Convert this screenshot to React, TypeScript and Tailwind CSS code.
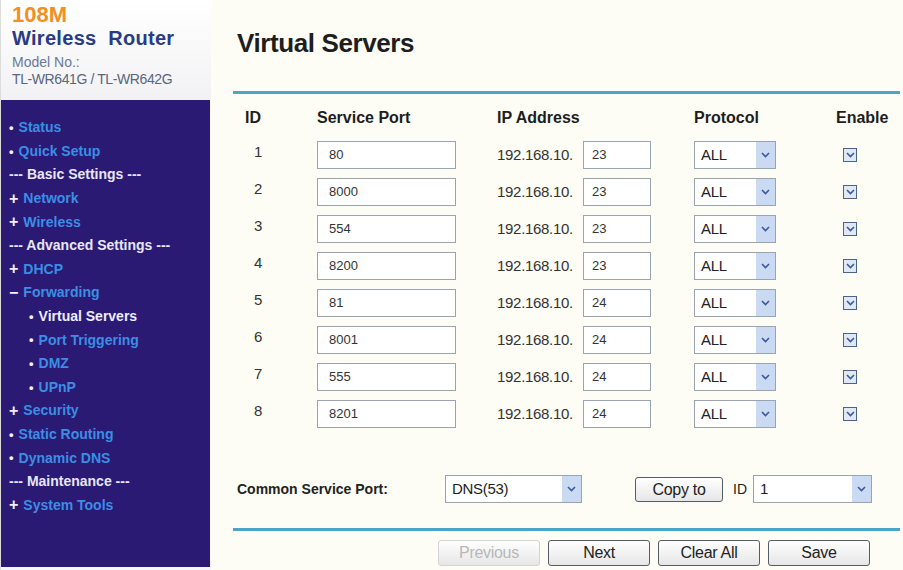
import React from 'react';

const menu: { kind: 'dot' | 'plus' | 'minus' | 'head' | 'sub'; label: string; active?: boolean }[] = [
  { kind: 'dot', label: 'Status' },
  { kind: 'dot', label: 'Quick Setup' },
  { kind: 'head', label: 'Basic Settings' },
  { kind: 'plus', label: 'Network' },
  { kind: 'plus', label: 'Wireless' },
  { kind: 'head', label: 'Advanced Settings' },
  { kind: 'plus', label: 'DHCP' },
  { kind: 'minus', label: 'Forwarding' },
  { kind: 'sub', label: 'Virtual Servers', active: true },
  { kind: 'sub', label: 'Port Triggering' },
  { kind: 'sub', label: 'DMZ' },
  { kind: 'sub', label: 'UPnP' },
  { kind: 'plus', label: 'Security' },
  { kind: 'dot', label: 'Static Routing' },
  { kind: 'dot', label: 'Dynamic DNS' },
  { kind: 'head', label: 'Maintenance' },
  { kind: 'plus', label: 'System Tools' },
];

const rows = [
  { id: 1, port: '80', ip: '23' },
  { id: 2, port: '8000', ip: '23' },
  { id: 3, port: '554', ip: '23' },
  { id: 4, port: '8200', ip: '23' },
  { id: 5, port: '81', ip: '24' },
  { id: 6, port: '8001', ip: '24' },
  { id: 7, port: '555', ip: '24' },
  { id: 8, port: '8201', ip: '24' },
];

function Chevron() {
  return (
    <svg width="9" height="6" viewBox="0 0 9 6">
      <path d="M1 1 L4.5 4.5 L8 1" fill="none" stroke="#3a5a9a" strokeWidth="1.6" />
    </svg>
  );
}

function Select({ value, w }: { value: string; w: string }) {
  return (
    <div className={`${w} h-[28px] flex items-stretch border border-[#9aa4b0] bg-white font-normal`}>
      <span className="flex-1 pl-[6px] flex items-center text-[15px] text-[#222] tracking-[-0.3px]">{value}</span>
      <span className="w-[19px] bg-[#c9daf2] flex items-center justify-center">
        <Chevron />
      </span>
    </div>
  );
}

function Check() {
  return (
    <span className="w-[14px] h-[14px] border border-[#4a6488] bg-[#dfe8f4] flex items-center justify-center">
      <Chevron />
    </span>
  );
}

function Btn({ label, disabled }: { label: string; disabled?: boolean }) {
  return (
    <button
      className={`w-[102px] h-[26px] rounded-[3px] text-[16px] tracking-[-0.3px] bg-gradient-to-b from-white to-[#e6e6e6] ${
        disabled ? 'border border-[#d4d4d4] text-[#b8b8b8]' : 'border border-[#555c66] text-[#222]'
      }`}
    >
      {label}
    </button>
  );
}

export default function App() {
  return (
    <div className="w-[903px] h-[570px] flex bg-[#fdfdf5] font-['Liberation_Sans',Arial,sans-serif] overflow-hidden">
      <aside className="w-[211px] flex flex-col bg-[#f6f6f8] border-l border-[#dcdcdc]">
        <div className="h-[100px] pl-[11px] pt-[3px] bg-gradient-to-b from-white to-[#f2f2f4]">
          <div className="text-[#f0901e] text-[22px] font-bold leading-[23px]">108M</div>
          <div className="text-[#2a3b86] text-[20px] font-bold leading-[24px] tracking-[0.3px]">
            Wireless&nbsp; Router
          </div>
          <div className="text-[#6a7894] text-[14px] leading-[17px] mt-[4px]">Model No.:</div>
          <div className="text-[#5a6580] text-[14px] leading-[17px] tracking-[-0.4px]">TL-WR641G / TL-WR642G</div>
        </div>
        <nav className="flex-1 mr-[1px] mb-[3px] bg-[#2a1a74] pt-[16px] pl-[8px] text-[14px] font-bold">
          {menu.map((m) => {
            if (m.kind === 'head')
              return (
                <div key={m.label} className="h-[23.6px] flex items-center text-[#e8e6f6]">
                  --- {m.label} ---
                </div>
              );
            const mark = m.kind === 'plus' ? '+' : m.kind === 'minus' ? '−' : '•';
            return (
              <div
                key={m.label}
                className={`h-[23.6px] flex items-center gap-[5px] ${m.kind === 'sub' ? 'pl-[20px]' : ''}`}
              >
                <span className={`text-[#f4f0ff] ${m.kind === 'plus' || m.kind === 'minus' ? 'text-[16px]' : 'text-[13px]'}`}>
                  {mark}
                </span>
                <span className={m.active ? 'text-[#eeeefc]' : 'text-[#3b8ee4]'}>{m.label}</span>
              </div>
            );
          })}
        </nav>
      </aside>

      <main className="flex-1 flex flex-col pl-[22px] pr-[3px]">
        <h1 className="pl-[4px] pt-[28px] text-[26px] font-bold text-[#1e1e1e] leading-[30px] tracking-[-0.4px]">
          Virtual Servers
        </h1>
        <div className="mt-[33px] h-[3px] bg-[#4aa6c2]" />

        <div className="pl-[12px] mt-[13px] flex items-center h-[22px] text-[16px] font-bold text-[#1e1e1e]">
          <span className="w-[72px]">ID</span>
          <span className="w-[180px]">Service Port</span>
          <span className="w-[197px]">IP Address</span>
          <span className="w-[142px]">Protocol</span>
          <span>Enable</span>
        </div>

        <div className="mt-[12px] flex flex-col gap-[9px]">
          {rows.map((r) => (
            <div key={r.id} className="pl-[12px] flex items-center h-[28px] text-[15px] text-[#333]">
              <span className="w-[72px] pl-[9px] -mt-[6px]">{r.id}</span>
              <div className="w-[180px]">
                <div className="w-[139px] h-[28px] border border-[#9aa4b0] bg-white pl-[11px] flex items-center text-[13px] text-[#333]">
                  {r.port}
                </div>
              </div>
              <div className="w-[197px] flex items-center gap-[10px]">
                <span className="tracking-[-0.3px]">192.168.10.</span>
                <div className="w-[68px] h-[28px] border border-[#9aa4b0] bg-white pl-[8px] flex items-center text-[13px]">
                  {r.ip}
                </div>
              </div>
              <div className="w-[149px]">
                <Select value="ALL" w="w-[82px]" />
              </div>
              <Check />
            </div>
          ))}
        </div>

        <div className="pl-[4px] mt-[47px] flex items-center h-[28px] text-[14px] font-bold text-[#222]">
          <span className="w-[208px]">Common Service Port:</span>
          <Select value="DNS(53)" w="w-[137px]" />
          <button className="ml-[53px] w-[88px] h-[25px] rounded-[3px] border border-[#555c66] bg-gradient-to-b from-white to-[#e6e6e6] text-[16px] font-normal tracking-[-0.3px]">
            Copy to
          </button>
          <span className="ml-[10px] font-normal text-[14px]">ID</span>
          <div className="ml-[6px]">
            <Select value="1" w="w-[119px]" />
          </div>
        </div>

        <div className="mt-[25px] h-[3px] bg-[#4aa6c2]" />
        <div className="mt-[9px] flex gap-[8px] pl-[205px]">
          <Btn label="Previous" disabled />
          <Btn label="Next" />
          <Btn label="Clear All" />
          <Btn label="Save" />
        </div>
      </main>
    </div>
  );
}
